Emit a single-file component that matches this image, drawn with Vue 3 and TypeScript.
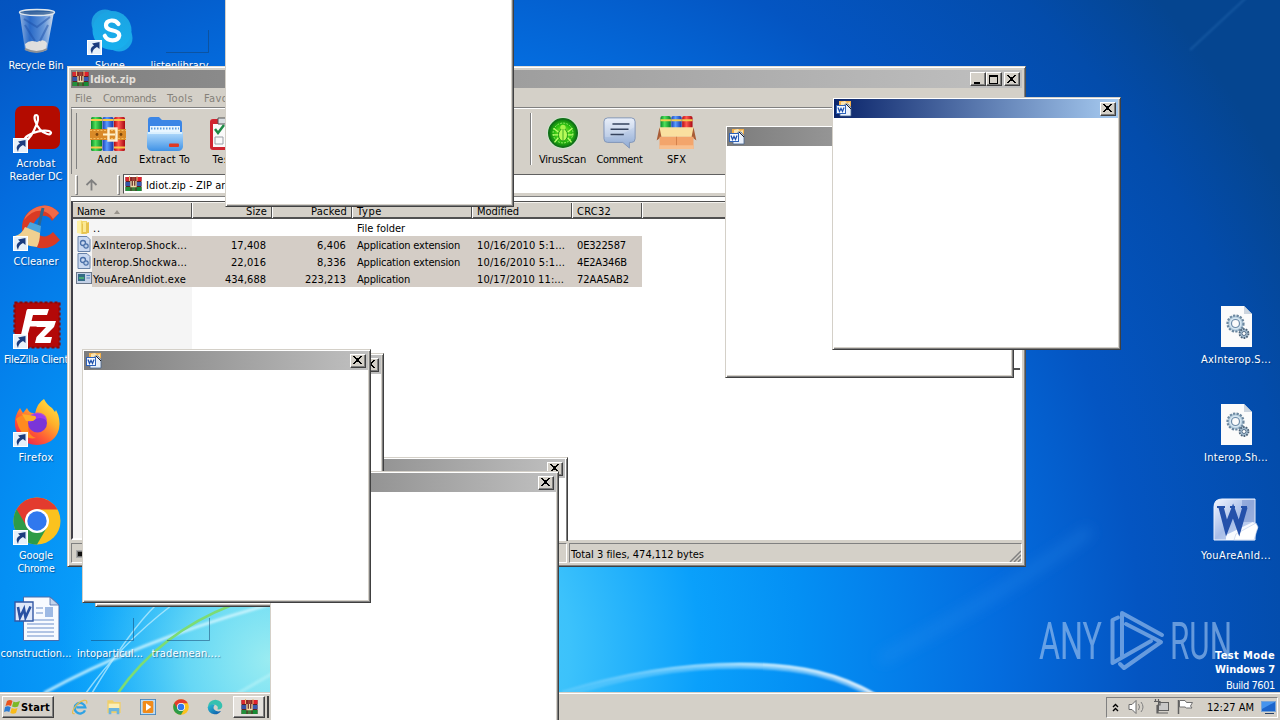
<script setup lang="ts">
interface DesktopItem { icon: string; lines: [string, number][]; x: number; y: number; link?: boolean }
interface Popup { x: number; y: number; h?: number; active?: boolean; cut?: boolean }
interface Row { icon: string; cells: [string, number][]; selected: boolean }

// Sets letter spacing so a label takes the given width in pixels.
const vFit = {
  mounted(el: HTMLElement, binding: { value: number }) {
    const natural = el.getBoundingClientRect().width
    const count = (el.textContent ?? '').length
    if (count && binding.value) el.style.letterSpacing = `${(binding.value - natural) / count}px`
  },
}

const items: DesktopItem[] = [
  { icon: 'bin', lines: [['Recycle Bin', 55]], x: 37, y: 7 },
  { icon: 'skype', lines: [['Skype', 30]], x: 111, y: 7, link: true },
  { icon: 'ghost', lines: [['listenlibrary....', 69]], x: 186, y: 7 },
  { icon: 'acrobat', lines: [['Acrobat', 39], ['Reader DC', 53]], x: 37, y: 105, link: true },
  { icon: 'ccleaner', lines: [['CCleaner', 45]], x: 37, y: 203, link: true },
  { icon: 'filezilla', lines: [['FileZilla Client', 64]], x: 37, y: 301, link: true },
  { icon: 'firefox', lines: [['Firefox', 35]], x: 37, y: 399, link: true },
  { icon: 'chrome', lines: [['Google', 34], ['Chrome', 37]], x: 37, y: 497, link: true },
  { icon: 'doc', lines: [['construction...', 71]], x: 37, y: 595 },
  { icon: 'ghost', lines: [['intoparticul...', 66]], x: 111, y: 595 },
  { icon: 'ghost', lines: [['trademean....', 69]], x: 187, y: 595 },
  { icon: 'dll', lines: [['AxInterop.S...', 70]], x: 1237, y: 301 },
  { icon: 'dll', lines: [['Interop.Sh...', 64]], x: 1237, y: 399 },
  { icon: 'word', lines: [['YouAreAnId...', 70]], x: 1237, y: 497 },
]

const popups: Popup[] = [
  { x: 279, y: 457, h: 84, cut: true },
  { x: 95, y: 353, h: 254 },
  { x: 270, y: 471 },
  { x: 82, y: 349, h: 254 },
  { x: 725, y: 125 },
  { x: 225, y: -46 },
  { x: 832, y: 97, active: true },
]

const rows: Row[] = [
  { icon: 'folder16', selected: false, cells: [['..', 8], ['', 0], ['', 0], ['File folder', 48], ['', 0], ['', 0]] },
  { icon: 'dll16', selected: true, cells: [['AxInterop.Shock...', 94], ['17,408', 35], ['6,406', 29], ['Application extension', 103], ['10/16/2010 5:1...', 88], ['0E322587', 49]] },
  { icon: 'dll16', selected: true, cells: [['Interop.Shockwa...', 94], ['22,016', 35], ['8,336', 29], ['Application extension', 103], ['10/16/2010 5:1...', 88], ['4E2A346B', 50]] },
  { icon: 'exe16', selected: true, cells: [['YouAreAnIdiot.exe', 93], ['434,688', 41], ['223,213', 41], ['Application', 53], ['10/17/2010 11:...', 87], ['72AA5AB2', 52]] },
]
const heads: [string, number][] = [['Name', 28], ['Size', 21], ['Packed', 36], ['Type', 25], ['Modified', 42], ['CRC32', 34]]
const menu: [string, number][] = [['File', 17], ['Commands', 53], ['Tools', 26], ['Favorites', 48]]
const toolsLeft: [string, string, number][] = [['books', 'Add', 21], ['extract', 'Extract To', 51], ['test', 'Test', 22]]
const toolsRight: [string, string, number][] = [['virus', 'VirusScan', 47], ['comment', 'Comment', 46], ['sfx', 'SFX', 19]]
const quick = ['ie', 'explorer', 'media', 'chrome', 'edge']
</script>

<template>
  <div class="desktop">
    <svg class="defs" width="0" height="0" aria-hidden="true">
      <defs>
        <linearGradient id="gGreen"><stop offset="0" stop-color="#0b8a2a" /><stop offset=".4" stop-color="#4fe05a" /><stop offset="1" stop-color="#078026" /></linearGradient>
        <linearGradient id="gBlue"><stop offset="0" stop-color="#1c42b8" /><stop offset=".4" stop-color="#5a9cff" /><stop offset="1" stop-color="#1836a8" /></linearGradient>
        <linearGradient id="gRed"><stop offset="0" stop-color="#b80a14" /><stop offset=".4" stop-color="#ff5a50" /><stop offset="1" stop-color="#a80814" /></linearGradient>
        <linearGradient id="gFolder" x2="0" y2="1"><stop offset="0" stop-color="#b5dcfb" /><stop offset="1" stop-color="#3f92e6" /></linearGradient>
        <linearGradient id="gSkype" x2="0" y2="1"><stop offset="0" stop-color="#1ba3e2" /><stop offset="1" stop-color="#18b0ee" /></linearGradient>
        <linearGradient id="gGlass"><stop offset="0" stop-color="#a9c2e4" stop-opacity=".9" /><stop offset=".3" stop-color="#3a72c8" stop-opacity=".7" /><stop offset=".7" stop-color="#7ea6de" stop-opacity=".8" /><stop offset="1" stop-color="#d8e2ee" /></linearGradient>
        <linearGradient id="gFox" x1="1" y1="0" x2=".2" y2="1"><stop offset="0" stop-color="#fff04a" /><stop offset=".4" stop-color="#ffb02a" /><stop offset=".7" stop-color="#ff5a36" /><stop offset="1" stop-color="#e8204e" /></linearGradient>
        <linearGradient id="gNote" x2="0" y2="1"><stop offset="0" stop-color="#e4ebf8" /><stop offset="1" stop-color="#8ea9d2" /></linearGradient>
        <linearGradient id="gWord" x1="0" y1="0" x2="1" y2="1"><stop offset="0" stop-color="#f2f6ff" /><stop offset=".5" stop-color="#a8bde8" /><stop offset="1" stop-color="#dbe5f8" /></linearGradient>
        <linearGradient id="gEdge" x2="1" y2="1"><stop offset="0" stop-color="#2cc3d2" /><stop offset="1" stop-color="#0b50a8" /></linearGradient>
        <radialGradient id="gVirus"><stop offset="0" stop-color="#9cf53c" /><stop offset=".6" stop-color="#2cc010" /><stop offset="1" stop-color="#0b7a10" /></radialGradient>
      </defs>
      <symbol id="bin" viewBox="0 0 48 48">
        <path d="M6.500 5L12 43Q24 48 34 43L41 5Z" fill="url(#gGlass)" />
        <path d="M12 37Q17 32 24 35Q31 31 34 36L33 43Q24 47 13 43Z" fill="#e8e4de" opacity=".95" />
        <path d="M11 12L24 20L37 10M12 18Q18 28 22 34M35 18L27 34" stroke="#1d4fa8" stroke-width="2" fill="none" opacity=".5" />
        <ellipse cx="24" cy="5.500" rx="17.500" ry="3" fill="#41658f" fill-opacity=".7" stroke="#dfe7ee" stroke-width="1.400" />
        <path d="M12 42Q24 48 34 42" stroke="#8d9197" stroke-width="2" fill="none" />
      </symbol>
      <symbol id="skype" viewBox="0 0 48 48">
        <circle cx="18" cy="16" r="13.500" fill="#1d9fe0" /><circle cx="32" cy="31" r="13.500" fill="#1aa8e8" /><circle cx="25" cy="23.500" r="19.500" fill="url(#gSkype)" />
        <path d="M31.500 17Q29 13.200 24.500 13.500Q19 14 19 18.500Q19 22 25 23.300Q32.500 24.800 32.300 28.500Q31.500 33.300 25.500 33.300Q20 33.300 17.800 28.800" fill="none" stroke="#fff" stroke-width="4.200" stroke-linecap="round" />
      </symbol>
      <symbol id="ghost" viewBox="0 0 48 48"><path d="M4 45.500H46.500V23" fill="none" stroke="#14406c" stroke-opacity=".5" /></symbol>
      <symbol id="acrobat" viewBox="0 0 48 48">
        <rect x="2" y="1" width="45" height="43" rx="7" fill="#b30b00" />
        <path d="M22 10.500C25 8.500 26 13 24 18.500C21 26 17 34 13 35.500C9 36 12 31 20 28C27 25.500 36 24.500 38 27.500C38.500 31 31 29 27 24.500C23 20 20.500 13 22 10.500Z" fill="none" stroke="#fff" stroke-width="2.200" />
      </symbol>
      <symbol id="ccleaner" viewBox="0 0 48 48">
        <path d="M46 10Q37 -1 24 4Q9 10 9 25Q10 41 26 45Q38 47 47 37L40 29Q33 36 26 32Q19 28 21 20Q26 11 33 13Q37 14 39 18Z" fill="#d93a24" />
        <path d="M46 10Q37 -1 24 4Q14 8 11 17Q20 6 30 8Q37 10 40 16Z" fill="#f26a48" />
        <path d="M30 5L25 26" stroke="#2d6792" stroke-width="3" />
        <path d="M17 19L28 23L27 31L13 26Z" fill="#4ca4dc" />
        <path d="M12 24L27 30Q27 38 24 44Q9 43 2 33Q9 31 12 24Z" fill="#f0d090" />
      </symbol>
      <symbol id="filezilla" viewBox="0 0 48 48">
        <rect x="1.500" y="1.500" width="45" height="45" fill="#b30808" stroke="#8a0808" stroke-width="2.200" stroke-dasharray="3 2" />
        <path d="M15 8H36L34 14H20L18.500 20H28L26.500 25.500H17L13.500 38H7L13 12Q13.500 8 15 8Z" fill="#fff" />
        <path d="M25 20H43L41 26L31 36H39L37.500 42H22L23.500 36L33 26H23.500Z" fill="#fff" />
      </symbol>
      <symbol id="firefox" viewBox="0 0 48 48">
        <path d="M24 46Q5 45 2 27Q1 17 7 9L10 14L14 9Q16 14 20 14L22 15Q24 4 31 0Q34 6 39 9L42 13L43 11Q48 20 46 30Q42 45 24 46Z" fill="url(#gFox)" />
        <path d="M3 20Q8 15 12 17L20 18Q24 19 21 22L16 25Q13 35 23 39Q14 41 9 34Q5 28 3 20Z" fill="#ff8a20" />
        <circle cx="24.500" cy="24" r="9.500" fill="#7a35d8" /><path d="M15 20Q19 12 28 14Q34 16 34 22Q29 17 23 20L16 24Z" fill="#a93ef0" opacity=".8" />
        <path d="M9 15L22 17Q25 19 20 22L13 22Z" fill="#ffac28" />
      </symbol>
      <symbol id="chrome" viewBox="0 0 48 48">
        <circle cx="24" cy="24" r="23.500" fill="#fbc21e" />
        <path d="M24 24L3.600 12.300A23.500 23.500 0 0 0 24 47.500L34.200 30Z" fill="#2d9b47" />
        <path d="M24 12.500H44.500A23.500 23.500 0 0 0 3.600 12.300L14 30L24 24Z" fill="#e33b2e" />
        <circle cx="24" cy="24" r="12" fill="#fff" /><circle cx="24" cy="24" r="9.700" fill="#3078ee" />
      </symbol>
      <symbol id="doc" viewBox="0 0 48 48">
        <path d="M10.500 2H37L46 10V45.500H10.500Z" fill="#f7faff" stroke="#4a6cab" /><path d="M37 2V10H46Z" fill="#c3d3ea" stroke="#4a6cab" stroke-width=".8" />
        <path d="M23 13H30M23 18H30M14 25H41M14 29H41M14 33H41M14 37H41M14 41H41" stroke="#6d8fca" />
        <rect x="32" y="12" width="8" height="10" fill="#9db9e4" /><path d="M2 7H20V26H2Z" fill="#dfe8fa" stroke="#3358a5" stroke-width="1.400" />
        <path d="M5 12L7 22.500L11 14L12.500 22.500L17.500 11.500" fill="none" stroke="#2951a3" stroke-width="2.600" />
      </symbol>
      <symbol id="dll" viewBox="0 0 48 48">
        <path d="M8 5H31L39 13V46H8Z" fill="#fbfbfb" /><path d="M31 5V13H39Z" fill="#cbd4de" />
        <circle cx="22.500" cy="22.500" r="8" fill="#b4cbdc" stroke="#6b879f" stroke-width="2.200" stroke-dasharray="2.200 1.300" /><circle cx="22.500" cy="22.500" r="6" fill="#d5e6f1" /><circle cx="22.500" cy="22.500" r="4" fill="#fbfbfb" stroke="#6d8ba8" stroke-width="1.200" />
        <circle cx="31" cy="32.500" r="4.500" fill="#a2bbcf" stroke="#4d6379" stroke-width="1.800" stroke-dasharray="1.700 1.100" /><circle cx="31" cy="32.500" r="2" fill="#fff" stroke="#59718a" />
      </symbol>
      <symbol id="word" viewBox="0 0 48 48">
        <path d="M9 2H42V43H1V10Q1 2 9 2Z" fill="url(#gWord)" stroke="#edf2ff" />
        <path d="M29 3H41.500V25H29Z" fill="#7f98d1" opacity=".6" /><path d="M13 38L40 25L45 31L38 43H13Z" fill="#f8faff" /><path d="M23 37L43 26L45 30L41 43H21Z" fill="#fff" stroke="#bac9e7" stroke-width=".6" />
        <path d="M8 10L13.500 31L20 14L26 31L32 10" fill="none" stroke="#2450aa" stroke-width="5.200" />
        <path d="M4 10H12M17 10H22M28 10H34" stroke="#2450aa" stroke-width="2" />
      </symbol>
      <symbol id="arrow" viewBox="0 0 15 15">
        <rect x=".5" y=".5" width="14" height="14" fill="#e6f0fa" stroke="#fff" /><path d="M5 14Q1.500 8 7 5.500L5 3.500L12.500 2V9L10 7Q5.500 9 5 14Z" fill="#1b3c7e" />
      </symbol>
      <symbol id="books" viewBox="0 0 36 36">
        <rect x="1" y="1" width="11" height="34" rx="1.500" fill="url(#gGreen)" /><rect x="12.500" y="1" width="11" height="34" rx="1.500" fill="url(#gBlue)" /><rect x="24" y="1" width="11" height="34" rx="1.500" fill="url(#gRed)" />
        <path d="M1 4H12M12.500 4H23.500M24 4H35M1 31.500H12M24 31.500H35" stroke="#f6c84a" stroke-width="2" />
        <rect x="0" y="13" width="36" height="11" fill="#d98a28" /><path d="M0 14.500H36M0 22.500H36" stroke="#f6bd60" stroke-width="1.200" stroke-dasharray="2 1.500" />
        <rect x="18.500" y="12.500" width="8" height="12" fill="none" stroke="#fdf0d0" stroke-width="2.400" /><path d="M13 18.500H25" stroke="#fff1c8" stroke-width="2" /><circle cx="7" cy="18.500" r="1.400" fill="#7b450c" /><circle cx="31" cy="18.500" r="1.400" fill="#7b450c" />
      </symbol>
      <symbol id="rar16" viewBox="0 0 16 16">
        <path d="M0 1H16V15H0Z" fill="#5b2320" /><path d="M0 1H5V5H0Z" fill="#d82831" /><path d="M6 1H10V5H6Z" fill="#9c3d35" /><path d="M11 1H16V5H11Z" fill="#e11f2d" />
        <path d="M0 6H5V10H0Z" fill="#3554a8" /><path d="M11 6H16V10H11Z" fill="#3c59ad" /><path d="M0 11H5V15H0Z" fill="#23903b" /><path d="M6 11H10V15H6Z" fill="#3e7c3a" /><path d="M11 11H16V15H11Z" fill="#178c34" />
        <path d="M5.500 5V10.500H10.500V5M8 5V10" fill="none" stroke="#f2d9aa" stroke-width="1.300" /><path d="M4 0V5M11.500 0V5" stroke="#e4b870" />
      </symbol>
      <symbol id="extract" viewBox="0 0 36 36">
        <path d="M1 4Q1 1 4 1H12L15 4H32Q35 4 35 7V20H1Z" fill="#3b86e6" /><path d="M3 10H33V22H3Z" fill="#e9f6ff" /><path d="M4 12.500H32" stroke="#5b9cde" stroke-width="2" stroke-dasharray="1.500 1.500" />
        <path d="M0 16H36V31Q35 35 31 35H5Q1 35 0 31Z" fill="url(#gFolder)" /><path d="M1 17H35" stroke="#e8f7ff" stroke-width="1.500" /><rect x="22" y="27.500" width="10" height="3.500" rx="1" fill="#e03a24" />
      </symbol>
      <symbol id="test" viewBox="0 0 36 36">
        <rect x="4" y="3" width="28" height="31" rx="3" fill="#d02430" /><rect x="7" y="8" width="22" height="23" fill="#fafafa" /><path d="M12 2H24V8H12Z" fill="#d8dce0" stroke="#555" />
        <path d="M9 13L12 17L18 9" stroke="#1e8b46" stroke-width="2.500" fill="none" /><path d="M9 21H17V28H9ZM20 14H27M20 23H27" fill="none" stroke="#9a9fa6" />
      </symbol>
      <symbol id="virus" viewBox="0 0 36 36">
        <circle cx="18" cy="18" r="17" fill="#cfe3cb" /><circle cx="18" cy="18" r="15" fill="url(#gVirus)" stroke="#13701a" stroke-width="1.800" />
        <circle cx="18" cy="18" r="10.500" fill="none" stroke="#9af06a" stroke-width="1" stroke-dasharray="2 1.300" />
        <ellipse cx="18" cy="20" rx="4.800" ry="6.500" fill="#b7fa58" stroke="#178c17" /><circle cx="18" cy="12" r="2.800" fill="#a5f34c" />
        <path d="M13 17L8 13M13 20H7M13 23L9 28M23 17L28 13M23 20H29M23 23L27 28" stroke="#baff6d" stroke-width="1.400" /><path d="M18 14V26" stroke="#3bab22" />
      </symbol>
      <symbol id="comment" viewBox="0 0 36 36">
        <path d="M5 2H30Q34 2 34 6V24Q34 28 30 28H28L28 34L21 28H5Q1 28 1 24V6Q1 2 5 2Z" fill="url(#gNote)" stroke="#8195b7" /><path d="M2 22Q14 24 33 12V6Q33 3 30 3H5Q2 3 2 6Z" fill="#fff" opacity=".2" />
        <path d="M10 8.500H28M8 14H27M8 19.500H22" stroke="#35435d" stroke-width="1.500" />
      </symbol>
      <symbol id="sfx" viewBox="0 0 42 36">
        <rect x="4" y="0" width="11" height="16" rx="2" fill="url(#gGreen)" /><rect x="15.500" y="0" width="11" height="16" rx="2" fill="url(#gBlue)" /><rect x="27" y="0" width="11" height="16" rx="2" fill="url(#gRed)" /><path d="M4 4.500H38" stroke="#f4cc50" stroke-width="2" stroke-dasharray="11 .5" />
        <path d="M3 12H39V22H3Z" fill="#fae0a0" /><path d="M3 12L0 26L5 22ZM39 12L42 26L37 22Z" fill="#a85c36" /><path d="M3 22H39V35H3Z" fill="#f3a56c" /><path d="M21 22V35" stroke="#d17e49" /><path d="M3 31H39V35H3Z" fill="#f8bf8e" />
      </symbol>
      <symbol id="info" viewBox="0 0 36 36"><circle cx="18" cy="18" r="17" fill="#c4d6ea" /></symbol>
      <symbol id="folder16" viewBox="0 0 16 16"><path d="M1 2L6 1V15L1 14Z" fill="#fdf0a4" /><path d="M5 2H11V15H5Z" fill="#f1d76a" /><path d="M6 5L13 3V14L6 15Z" fill="#e6c24e" /><path d="M7 3H10V13H7Z" fill="#fbe993" /></symbol>
      <symbol id="dll16" viewBox="0 0 16 16"><path d="M2 .5H11L14 3.500V15.500H2Z" fill="#c9d8f0" stroke="#6882a8" /><circle cx="7" cy="7" r="2.500" fill="none" stroke="#496fa8" stroke-width="1.300" /><circle cx="10" cy="10" r="2.200" fill="#b9cde8" stroke="#496fa8" stroke-width="1.200" /></symbol>
      <symbol id="exe16" viewBox="0 0 16 16"><rect x=".5" y="2.500" width="15" height="11" fill="#c3d0e6" stroke="#6a7688" /><rect x="2" y="4" width="7" height="7" fill="#346b86" /><path d="M3 8H8" stroke="#49a876" stroke-width="2" /><path d="M10.500 5.500H14M10.500 8H14" stroke="#5b86c2" /></symbol>
      <symbol id="w16" viewBox="0 0 16 16">
        <path d="M3 0H15V6H3Z" fill="#f4b04a" /><path d="M5 1L9 0L11 2L14 1V5H5Z" fill="#fbe4b0" /><path d="M9 3H12L15 6.500V15H4V12H9Z" fill="#e9f0fb" stroke="#48658f" stroke-width=".8" /><path d="M10 3L15 8" stroke="#1c1c24" />
        <rect x=".5" y="4.500" width="9" height="8" fill="#f5f9ff" stroke="#2d62ba" /><path d="M2 6.500L3.500 10.500L5 7.500L6.500 10.500L8 6.500" fill="none" stroke="#1d50ac" stroke-width="1.300" />
      </symbol>
      <symbol id="ie" viewBox="0 0 48 48"><path d="M39 34A16 16 0 1 1 40 25H13" fill="none" stroke="#2fa2e4" stroke-width="7" /><path d="M8 44Q-3 46 5 30Q18 8 36 4Q47 2 44 14" fill="none" stroke="#e8bd48" stroke-width="3.500" /></symbol>
      <symbol id="explorer" viewBox="0 0 48 48"><path d="M4 4H20L24 9H44V42H4Z" fill="#f0cf6a" /><path d="M8 14H40V30H8Z" fill="#fbeeb6" /><path d="M8 27H40V46H32V37H16V46H8Z" fill="#6ab4de" /></symbol>
      <symbol id="media" viewBox="0 0 48 48"><rect x="1" y="1" width="46" height="46" fill="#bfdcf2" stroke="#3f82bd" stroke-width="3" /><rect x="8" y="6" width="32" height="36" rx="4" fill="#f18b1a" /><path d="M18 13L34 24L18 35Z" fill="#fff" /></symbol>
      <symbol id="edge" viewBox="0 0 48 48"><path d="M2 26Q4 3 25 2Q46 4 46 22Q44 33 31 31Q36 22 25 17Q11 15 2 26Z" fill="#35c1b0" /><path d="M2 25Q10 12 24 17Q17 23 21 31Q27 40 42 36Q34 47 22 46Q3 43 2 25Z" fill="url(#gEdge)" /></symbol>
      <symbol id="close" viewBox="0 0 9 8" shape-rendering="crispEdges"><path d="M0 0H2V1H3V2H6V1H7V0H9V1H8V2H7V3H6V5H7V6H8V7H9V8H7V7H6V6H3V7H2V8H0V7H1V6H2V5H3V3H2V2H1V1H0Z" fill="#000" /></symbol>
    </svg>

    <svg class="wall" viewBox="0 0 1280 720" aria-hidden="true">
      <defs>
        <radialGradient id="sky" gradientUnits="userSpaceOnUse" cx="400" cy="650" r="1000">
          <stop offset="0" stop-color="#5ad4fa" /><stop offset=".17" stop-color="#3cc2fb" /><stop offset=".3" stop-color="#0aa0fb" /><stop offset=".4" stop-color="#0490f4" />
          <stop offset=".5" stop-color="#047eea" /><stop offset=".6" stop-color="#046cde" /><stop offset=".74" stop-color="#0455c2" /><stop offset=".9" stop-color="#034cab" /><stop offset="1" stop-color="#054590" />
        </radialGradient>
        <radialGradient id="glow" gradientUnits="userSpaceOnUse" cx="270" cy="660" r="210"><stop offset="0" stop-color="#a4f0f0" stop-opacity=".9" /><stop offset=".4" stop-color="#84e8f2" stop-opacity=".65" /><stop offset="1" stop-color="#20c0fa" stop-opacity="0" /></radialGradient>
        <linearGradient id="arc" gradientUnits="userSpaceOnUse" x1="560" y1="0" x2="880" y2="0"><stop offset="0" stop-color="#8cd8ff" stop-opacity=".4" /><stop offset=".6" stop-color="#d8f4ff" /><stop offset="1" stop-color="#fff" /></linearGradient>
        <filter id="soft"><feGaussianBlur stdDeviation="1" /></filter><filter id="softer"><feGaussianBlur stdDeviation="7" /></filter>
      </defs>
      <rect width="1280" height="720" fill="url(#sky)" /><rect width="560" height="720" fill="url(#glow)" />
      <g fill="none">
        <path d="M880 660Q1010 590 1090 530" stroke="#3b97f0" stroke-width="9" opacity=".3" filter="url(#softer)" />
        <path d="M1190 50Q1220 22 1248 -4" stroke="#3d84c8" stroke-width="2" opacity=".3" filter="url(#soft)" />
        <path d="M560 697C640 670 700 666 740 666C800 666 840 676 878 698" stroke="url(#arc)" stroke-width="5" opacity=".5" filter="url(#soft)" /><path d="M562 692C640 668 700 664 740 664C800 664 840 674 876 695" stroke="url(#arc)" stroke-width="2.200" filter="url(#soft)" />
        <path d="M44 693Q140 640 275 603" stroke="#d5f7ff" stroke-width="3" opacity=".85" filter="url(#soft)" />
        <path d="M86 693Q120 645 172 605M92 693Q130 630 156 605" stroke="#c4f1ff" stroke-width="1.500" opacity=".7" />
        <path d="M118 693Q160 633 232 605" stroke="#7cdc74" stroke-width="2.500" />
        <path d="M235 695L275 672" stroke="#c6f7fa" stroke-width="3" opacity=".5" filter="url(#soft)" />
      </g>
      <g class="brand">
        <text x="1039" y="659" textLength="63" lengthAdjust="spacingAndGlyphs">ANY</text>
        <text x="1170" y="659" textLength="62" lengthAdjust="spacingAndGlyphs">RUN</text>
        <path d="M1118 617.500L1112.500 620V663L1151 641M1122 656V613L1162 635M1126 624L1161 642L1124 668L1120 664" />
      </g>
    </svg>

    <div v-for="it in items" :key="it.x + '-' + it.y" class="item" :style="{ left: it.x - 50 + 'px', top: it.y + 'px' }">
      <div class="pic"><svg width="48" height="48"><use :href="'#' + it.icon" /></svg><svg v-if="it.link" class="link" width="15" height="15"><use href="#arrow" /></svg></div>
      <div class="caption"><div v-for="l in it.lines" :key="l[0]"><span v-fit="l[1]" class="t">{{ l[0] }}</span></div></div>
    </div>

    <div class="mark">
      <b v-fit="60" class="t">Test Mode</b><b v-fit="60" class="t">Windows 7</b><span v-fit="49" class="t build">Build 7601</span>
    </div>

    <section class="rar">
      <header class="title"><svg width="17" height="16"><use href="#rar16" /></svg><b><span v-fit="46" class="t">Idiot.zip</span></b>
        <div class="ctl"><i class="btn min"><span></span></i><i class="btn max"><span></span></i><i class="btn cls"><svg width="9" height="8"><use href="#close" /></svg></i></div>
      </header>
      <nav class="menu"><span v-for="m in menu" :key="m[0]" v-fit="m[1]" class="t">{{ m[0] }}</span></nav>
      <div class="tools">
        <i class="grip"></i>
        <div v-for="t in toolsLeft" :key="t[0]" class="tool" :class="t[0]"><svg width="36" height="36"><use :href="'#' + t[0]" /></svg><span v-fit="t[2]" class="t">{{ t[1] }}</span></div>
        <div class="tool info"><svg width="32" height="36"><use href="#info" /></svg></div>
        <i class="sep"></i>
        <div v-for="t in toolsRight" :key="t[0]" class="tool"><svg :width="t[0] === 'sfx' ? 41 : 34" height="34"><use :href="'#' + t[0]" /></svg><span v-fit="t[2]" class="t">{{ t[1] }}</span></div>
      </div>
      <div class="addr">
        <i class="grip"></i>
        <svg class="up" width="13" height="12" viewBox="0 0 13 12"><path d="M6.500 11.500V2M1.500 6L6.500 1.200L11.500 6" fill="none" stroke="#808080" stroke-width="1.800" /></svg>
        <i class="grip"></i>
        <div class="path"><svg width="17" height="16"><use href="#rar16" /></svg><span v-fit="106" class="t">Idiot.zip - ZIP archive</span></div>
      </div>
      <div class="list">
        <div class="head grid"><div v-for="(h, i) in heads" :key="h[0]" class="c" :class="'c' + i"><span v-fit="h[1]" class="t">{{ h[0] }}</span><i v-if="i === 0" class="tri"></i></div><div class="c rest"></div></div>
        <div v-for="(r, k) in rows" :key="k" class="row grid" :class="{ sel: r.selected }">
          <div v-for="(c, i) in r.cells" :key="i" class="c" :class="'c' + i"><svg v-if="i === 0" width="16" height="16"><use :href="'#' + r.icon" /></svg><span v-fit="c[1]" class="t">{{ c[0] }}</span></div>
        </div>
        <div class="shade"></div>
      </div>
      <footer class="status"><div class="pane"><i class="led"></i></div><div class="pane"><span v-fit="133" class="t">Total 3 files, 474,112 bytes</span>
        <svg width="12" height="12" viewBox="0 0 12 12"><path d="M1 12L12 1M5 12L12 5M9 12L12 9" stroke="#808080" stroke-width="1.500" /></svg></div></footer>
    </section>
    <i class="trace"></i>

    <footer class="bar">
      <div class="start"><svg width="17" height="16" viewBox="0 0 17 16"><path d="M3 2Q6 0 8.500 2L7 7Q4.500 5.500 1.500 7Z" fill="#e9531d" /><path d="M9.500 2.500Q12 4 16 2L14 7.500Q11 9 8 7.500Z" fill="#7bb928" /><path d="M1 8Q4 6.500 6.700 8.300L5.300 13Q3 11.500 0 13Z" fill="#2b7cd3" /><path d="M7.700 9Q10.500 10.300 13.500 9L12 14Q9 15.500 6.300 14Z" fill="#f9bb19" /></svg><b><span v-fit="29" class="t">Start</span></b></div>
      <div class="quick"><svg v-for="q in quick" :key="q" width="16" height="16"><use :href="'#' + q" /></svg></div>
      <div class="task"><svg width="17" height="16"><use href="#rar16" /></svg></div><i class="edge"></i>
      <div class="tray">
        <svg width="7" height="9" viewBox="0 0 7 9"><path d="M1 4L3.500 1.500L6 4M1 8L3.500 5.500L6 8" fill="none" stroke="#000" stroke-width="1.400" /></svg>
        <svg class="spk" width="17" height="16" viewBox="0 0 17 16"><path d="M1 5.500H4L8 1.500V14.500L4 10.500H1Z" fill="#fff" stroke="#6b6b6b" /><path d="M10.500 5Q12.500 8 10.500 11M13 3Q17 8 13 13" fill="none" stroke="#808080" /></svg>
        <svg class="net" width="17" height="16" viewBox="0 0 17 16"><rect x="5.500" y="3.500" width="10" height="8" fill="#c8c8c8" stroke="#5f5f5f" /><path d="M7 14H15M2.500 0V3M5.500 0V3M1 2.500H7V6H5V14M4 6V14H9" fill="none" stroke="#606060" stroke-width="1.200" /></svg>
        <svg class="flag" width="17" height="16" viewBox="0 0 17 16"><path d="M1.500 1V15" stroke="#606060" stroke-width="1.500" /><path d="M2.500 1.500H8L9.500 3.500H15.500L13.500 7L15 9H9.500L8 8H2.500Z" fill="#fff" stroke="#707070" /></svg>
        <span v-fit="47" class="t clock">12:27 AM</span>
        <svg class="mon" width="15" height="13" viewBox="0 0 15 13"><rect x=".5" y=".5" width="14" height="10" fill="#1b65cc" stroke="#78a4d6" /><path d="M1 1H14L1 8Z" fill="#4594ee" /><path d="M4 12.500H13" stroke="#243f66" /></svg>
      </div>
    </footer>

    <div v-for="(p, i) in popups" :key="i" class="pop" :class="{ on: p.active, cut: p.cut }" :style="{ left: p.x + 'px', top: p.y + 'px', height: (p.h ?? 253) + 'px' }">
      <div class="ptitle"><svg width="16" height="16"><use href="#w16" /></svg><i class="btn cls"><svg width="9" height="8"><use href="#close" /></svg></i></div>
    </div>
  </div>
</template>

<style>
html, body { margin: 0; overflow: hidden; background: #0453b8; }
</style>

<style scoped>
.desktop { position: relative; width: 1280px; height: 720px; overflow: hidden; font: 11px/13px "DejaVu Sans Condensed", "DejaVu Sans", sans-serif; font-stretch: condensed; color: #000; }
.desktop *, .pop { box-sizing: border-box; }
.defs, .wall { position: absolute; left: 0; top: 0; }
.wall { width: 1280px; height: 720px; }
svg { display: block; flex: none; }
.t { display: inline-block; white-space: pre; flex: none; }
.brand { fill: #a7caf2; opacity: .6; font: 400 52px Roboto, sans-serif; }
.brand path { fill: none; stroke: #a7caf2; stroke-width: 4; stroke-linejoin: round; stroke-linecap: round; }
.item { position: absolute; width: 100px; display: flex; flex-direction: column; align-items: center; gap: 4px; }
.pic { position: relative; }
.link { position: absolute; left: 0; bottom: 0; }
.caption { color: #fff; text-align: center; text-shadow: 1px 1px 1px rgba(0, 40, 90, .55); padding-right: 2px; }
.mark { position: absolute; right: 5px; top: 649px; display: flex; flex-direction: column; align-items: flex-end; gap: 1px; color: #fff; }
.build { margin-top: 2px; }

.rar { position: absolute; left: 67px; top: 66px; width: 959px; height: 501px; display: flex; flex-direction: column; background: #d4d0c8; border: 1px solid; border-color: #e2ded6 #505050 #404040 #d4d0c8; box-shadow: inset 1px 1px #fff, inset -1px -1px #808080; padding: 3px; }
.title { height: 18px; display: flex; align-items: center; color: #e2dfd9; background: linear-gradient(90deg, #808080, #c0c0c0); padding-left: 1px; gap: 1px; flex: none; }
.ctl { margin-left: auto; display: flex; padding-right: 2px; }
.btn { display: flex; align-items: center; justify-content: center; width: 16px; height: 14px; background: #d4d0c8; border: 1px solid; border-color: #fff #404040 #404040 #fff; box-shadow: inset -1px -1px #808080; flex: none; }
.btn.cls svg { margin: -1px 1px 0 0; }
.min span { width: 6px; height: 2px; background: #000; margin: 7px 3px 0 0; }
.max span { width: 9px; height: 9px; border: 1px solid #000; border-top-width: 2px; margin: 0 1px 0 0; }
.ctl .cls { margin-left: 2px; }
.menu { height: 20px; display: flex; align-items: center; gap: 11px; padding: 1px 0 0 4px; color: #848078; border-bottom: 1px solid #808080; flex: none; }
.tools { height: 66px; display: flex; align-items: flex-start; border-top: 1px solid #fff; border-left: 1px solid #808080; padding: 4px 0 0 3px; flex: none; }
.grip { width: 3px; border: 1px solid; border-color: #fff #808080 #808080 #fff; flex: none; }
.tools .grip { height: 56px; width: 2px; border-width: 0 1px 0 0; }
.tool { width: 57px; display: flex; flex-direction: column; align-items: center; justify-content: space-between; height: 53px; padding-top: 3px; flex: none; }
.tools > .grip + .tool { margin-left: 2px; }
.tool.test { position: relative; left: 2px; }
.tool.info { width: 34px; margin-left: 230px; }
.sep { width: 2px; height: 52px; border-left: 1px solid #808080; border-right: 1px solid #fff; margin-left: 16px; flex: none; }
.sep + .tool { margin-left: 2px; }
.addr { display: flex; height: 22px; padding-left: 4px; flex: none; }
.addr .grip { height: 20px; margin-top: 1px; }
.up { margin: 5px 19px 0 7px; }
.path { flex: 1; height: 20px; margin-left: 3px; background: #fff; border: 1px solid #404040; border-color: #606060 #d4d0c8 #d4d0c8 #505050; display: flex; align-items: center; gap: 4px; padding-left: 1px; }
.path .t { padding-top: 2px; }
.list { position: relative; flex: 1; margin: 5px 0 0; border: 2px solid; background: #fff; border-color: #505050 #fff #fff #404048; box-shadow: 0 -4px #fff, 0 -5px #808080; border-top-width: 1px; clip-path: inset(-5px 0 0 0); }
.grid { display: grid; grid-template-columns: 119px 80px 80px 120px 100px 70px 1fr; position: relative; z-index: 1; }
.head { height: 17px; background: #d4d0c8; border-bottom: 2px solid #505050; border-top: 1px solid #f4f2ee; }
.c { display: flex; align-items: center; padding-left: 5px; min-width: 0; }
.head .c { border-right: 1px solid #505050; box-shadow: inset 1px 0 #fff; padding-top: 2px; }
.head .rest { border-right: 0; }
.head .c0 { padding-left: 4px; box-shadow: none; }
.c1, .c2 { justify-content: flex-end; padding-right: 6px; }
.head .c1, .head .c2 { padding-right: 4px; }
.tri { border: 3.5px solid transparent; border-top: 0; border-bottom: 4px solid #98948c; margin-left: 9px; }
.row { height: 17px; }
.row .c { padding-top: 1px; }
.row .c0 { padding-left: 3px; gap: 1px; }
.row .c0 svg { margin-top: -2px; }
.row.sel::before { content: ""; position: absolute; z-index: -1; left: 19px; width: 550px; top: 0; bottom: 0; background: #d4cdc6; }
.shade { position: absolute; left: 0; top: 17px; width: 119px; bottom: 0; background: #f5f5f5; }
.status { height: 20px; margin-top: 3px; display: flex; gap: 2px; flex: none; }
.pane { width: 496px; border: 1px solid; border-color: #808080 #fff #fff #808080; display: flex; align-items: center; padding: 2px 0 0 5px; flex: none; }
.pane + .pane { flex: 1; width: auto; padding-left: 1px; }
.pane svg { margin: 4px 0 0 auto; }
.led { width: 7px; height: 6px; border: 1px solid #777; background: #111; box-shadow: 0 0 0 1px #aaa; }
.trace { position: absolute; left: 1013px; top: 368px; width: 7px; height: 2px; background: #505050; }

.pop { position: absolute; width: 289px; background: #fff; border: 1px solid; border-color: #d4d0c8 #404040 #404040 #d4d0c8; box-shadow: inset 1px 1px #fff, inset -1px -1px #808080, inset -2px -2px #d4d0c8; padding: 1px; overflow: hidden; }
.pop.cut { border-bottom: 0; box-shadow: inset 1px 1px #fff, inset -1px 0 #808080; }
.ptitle { height: 19px; display: flex; align-items: center; justify-content: space-between; padding: 0 2px; margin-right: 1px; background: linear-gradient(90deg, #7c7c7c, #c0c0c0); }
.on .ptitle { background: linear-gradient(90deg, #0a246a, #a6caf0); }

.bar { position: absolute; left: 0; top: 692px; width: 1280px; height: 28px; display: flex; align-items: center; background: #d4d0c8; border-top: 1px solid #d4d0c8; box-shadow: inset 0 1px #fff; padding: 1px 2px 0; }
.start { width: 52px; height: 22px; display: flex; align-items: center; border: 1px solid; border-color: #fff #404040 #404040 #fff; box-shadow: inset -1px -1px #808080; padding-left: 1px; }
.quick { display: flex; gap: 17.800px; padding-left: 18px; }
.task { width: 32px; height: 22px; margin-left: 10px; display: flex; align-items: center; justify-content: center; background: #e4e1dc; border: 1px solid; border-color: #fff #404040 #404040 #fff; box-shadow: inset -1px -1px #808080; }
.edge { width: 2px; height: 22px; margin-left: 2px; background: #404040; }
.tray { width: 172px; height: 21px; margin-left: auto; display: flex; align-items: center; border: 1px solid; border-color: #808080 #fff #fff #808080; padding-left: 5px; }
.spk { margin-left: 9px; }
.net { margin-left: 8px; }
.flag { margin-left: 7px; }
.clock { margin-left: 13px; }
.mon { margin-left: 7px; }
</style>
